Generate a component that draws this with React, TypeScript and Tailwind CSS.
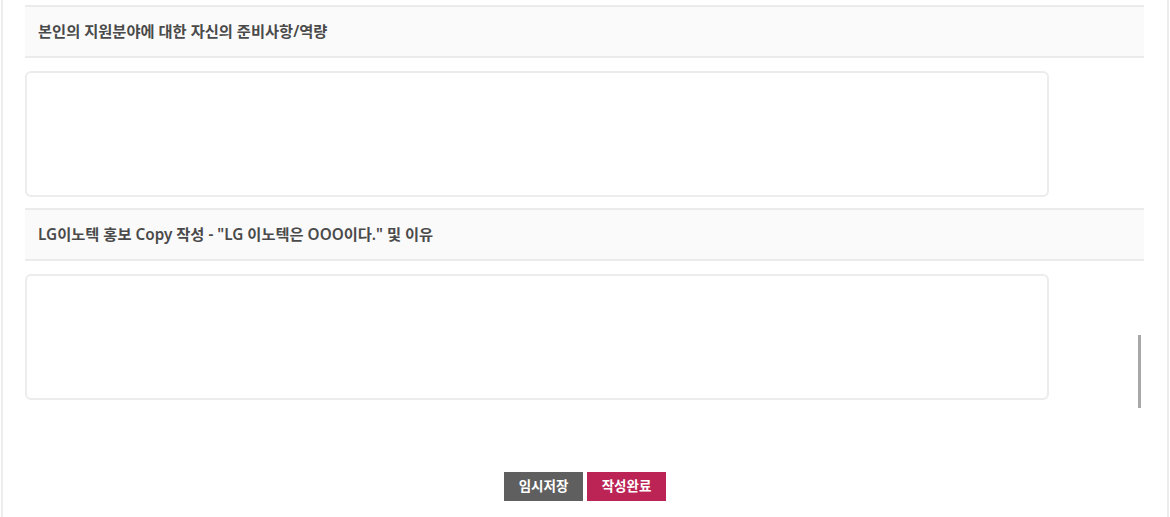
import React from 'react';

interface Question {
  id: string;
  title: string;
}

const questions: Question[] = [
  { id: 'q1', title: '본인의 지원분야에 대한 자신의 준비사항/역량' },
  { id: 'q2', title: 'LG이노텍 홍보 Copy 작성 - "LG 이노텍은 OOO이다." 및 이유' },
];

const App: React.FC = () => {
  return (
    <div
      className="relative h-[517px] w-[1170px] overflow-hidden bg-white"
      style={{ fontFamily: '"Noto Sans", "Noto Sans CJK KR", sans-serif' }}
    >
      <div className="ml-px mr-[1px] h-full border-x-2 border-[#ececec] pl-[22px] pt-[5px]">
        {questions.map((q, i) => (
          <div key={q.id} className={i > 0 ? 'mt-[11px]' : ''}>
            <div className="flex h-[53px] w-[1119px] items-center border-y-2 border-[#ebebeb] bg-[#fafafa] pl-[13px]">
              <span className="text-[15.3px] font-semibold text-[#4a4a4a]">{q.title}</span>
            </div>
            <textarea className="mt-[13px] block h-[126px] w-[1024px] resize-none rounded-md border-2 border-[#ececec] bg-white outline-none" />
          </div>
        ))}

        <div className="mt-[72px] flex justify-center gap-[4px] pr-[22px]">
          <button className="h-[29px] w-[79px] bg-[#5f5f5f] text-[13.5px] font-bold text-white">임시저장</button>
          <button className="h-[29px] w-[79px] bg-[#bb2455] text-[13.5px] font-bold text-white">작성완료</button>
        </div>
      </div>

      <div className="absolute left-[1138px] top-[335px] h-[73px] w-[3px] bg-[#a8a8a8]" />
    </div>
  );
};

export default App;
